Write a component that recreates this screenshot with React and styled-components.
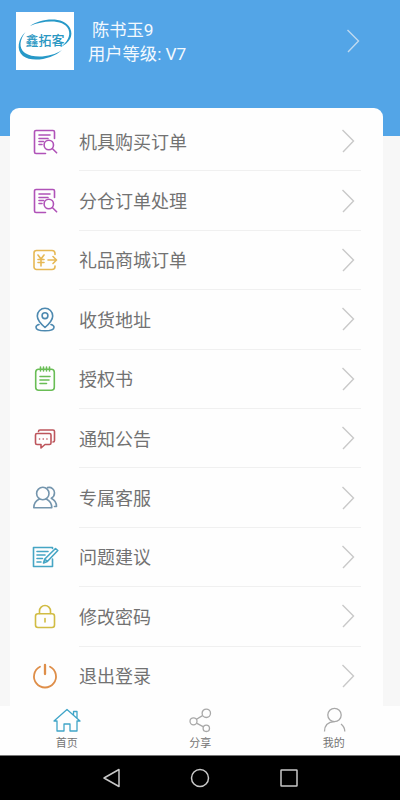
import React from "react";
import styled, { createGlobalStyle } from "styled-components";

const GlobalStyle = createGlobalStyle`
  * { box-sizing: border-box; }
  body {
    margin: 0;
    background: #f7f7f7;
    font-family: Roboto, "Noto Sans CJK SC", sans-serif;
  }
`;

const Screen = styled.div`
  width: 400px;
  height: 800px;
  display: flex;
  flex-direction: column;
  overflow: hidden;
`;

const Content = styled.main`
  height: 706px;
  flex: none;
  padding: 0 17px 0 10px;
  background: linear-gradient(#53a5e7 0 136px, #f7f7f7 136px);
`;

const Profile = styled.header`
  height: 108px;
  display: flex;
  align-items: flex-start;
  padding: 12px 23px 0 6px;
`;

const Logo = styled.svg`
  width: 58px;
  height: 58px;
  flex: none;
  background: #fff;
`;

const ProfileText = styled.div`
  flex: 1;
  padding: 6px 0 0 14px;
  color: #f3f9fe;
  font-size: 17.3px;
  line-height: 24px;
  white-space: nowrap;
`;

const Name = styled.div`
  padding-left: 4px;
`;

const Card = styled.section`
  height: 598px;
  padding: 4px 22px 0 23px;
  background: #fefefe;
  border-radius: 9px 9px 0 0;
`;

const Row = styled.div`
  height: 59.4px;
  display: flex;
  align-items: center;
`;

const RowBody = styled.div`
  flex: 1;
  height: 100%;
  margin-left: 22px;
  display: flex;
  align-items: center;
  justify-content: space-between;
  padding-right: 6px;
  border-bottom: 1px solid ${(p) => (p.$last ? "transparent" : "#f0f0f0")};
`;

const Label = styled.span`
  padding-top: 3px;
  color: #727272;
  font-size: 18px;
  line-height: 26px;
`;

const RowIcon = styled.svg`
  width: 24px;
  height: 26px;
  flex: none;
  overflow: visible;
  fill: none;
  stroke: ${(p) => p.$color};
  stroke-width: 1.6;
  stroke-linecap: round;
  stroke-linejoin: round;
`;

const Arrow = styled.svg`
  width: 14px;
  height: 26px;
  flex: none;
  margin-top: ${(p) => p.$top || 0}px;
  fill: none;
  stroke: ${(p) => p.$color || "#c9c9c9"};
  stroke-width: 1.4;
`;

const TabBar = styled.nav`
  height: 49px;
  flex: none;
  display: grid;
  grid-template-columns: repeat(3, 133.5px);
  background: #fefefe;
`;

const Tab = styled.div`
  display: flex;
  flex-direction: column;
  align-items: center;
  color: #747474;
  font-size: 11px;
  line-height: 16px;
`;

const TabIcon = styled.svg`
  width: 28px;
  height: 28px;
  margin-bottom: 2px;
  fill: none;
  stroke: ${(p) => p.$color};
  stroke-width: 1.3;
  stroke-linejoin: round;
`;

const SystemBar = styled.footer`
  height: 45px;
  flex: none;
  display: flex;
  align-items: center;
  justify-content: center;
  gap: 69px;
  border-top: 1px solid #777;
  background: #000;
`;

const SystemIcon = styled.svg`
  width: 20px;
  height: 20px;
  fill: none;
  stroke: #c8c8c8;
  stroke-width: 1.5;
  stroke-linejoin: round;
`;

const OrderIcon = () => (
  <RowIcon viewBox="0 0 24 26" $color="#b052b8">
    <path d="M21.5 9.500V3a1.500 1.500 0 0 0-1.500-1.500H3A1.500 1.500 0 0 0 1.500 3v20A1.500 1.500 0 0 0 3 24.500h9.500M6 6h11M6 9.500h9M6 12.500h4.500M6 15.500h3" />
    <circle cx="15.800" cy="16" r="4.700" />
    <path d="m19.300 19.500 4.300 4.300" />
  </RowIcon>
);

const GiftIcon = () => (
  <RowIcon viewBox="0 0 24 26" $color="#e6b854">
    <path d="M22 7.500V6.500a3 3 0 0 0-3-3H3.500A2.500 2.500 0 0 0 1 6v14a2.500 2.500 0 0 0 2.500 2.500H19a3 3 0 0 0 3-3V19M5 8l3 4 3-4M8 12v7M5 12.500h6M5 15.500h6M15 13h8M20 9.500l3.500 3.500-3.500 3.500" />
  </RowIcon>
);

const PinIcon = () => (
  <RowIcon viewBox="0 0 24 26" $color="#4d89b0">
    <path d="M12 20.500C8 17 4.300 13 4.300 9a7.700 7.700 0 0 1 15.400 0c0 4-3.700 8-7.700 11.500ZM6 17.500c-2 .6-3 1.500-3 2.700 0 2.300 4 3.600 9 3.600s9-1.300 9-3.600c0-1.200-1-2.100-3-2.700" />
    <circle cx="12" cy="8.700" r="2.900" />
  </RowIcon>
);

const NoteIcon = () => (
  <RowIcon viewBox="0 0 24 26" $color="#69bd55">
    <rect x="2.700" y="3.200" width="18.600" height="21" rx="3" />
    <path d="M7.500 1v4M10.500 1v4M13.500 1v4M16.500 1v4M7 10.500h10M7 14h9M7 17.500h6.500" />
  </RowIcon>
);

const MessageIcon = () => (
  <RowIcon viewBox="0 0 24 26" $color="#bd555c">
    <path d="M4 7.500h12.500A1.500 1.500 0 0 1 18 9v8a1.500 1.500 0 0 1-1.500 1.500H12L8 22v-3.500H4A1.500 1.500 0 0 1 2.500 17V9A1.500 1.500 0 0 1 4 7.500ZM5.500 5.500q0-1.500 1.500-1.500h13a1.500 1.500 0 0 1 1.500 1.500v9q0 1.500-1.500 1.500" />
    <path d="M6.500 13h.1M10.200 13h.1M13.900 13h.1" />
  </RowIcon>
);

const ServiceIcon = () => (
  <RowIcon viewBox="0 0 24 26" $color="#7495ad">
    <circle cx="9.800" cy="8.500" r="6.200" />
    <path d="M6.300 14c-4 2-5.500 4.800-5.500 8.700h18c0-4-1.500-6.700-5.500-8.700M14.500 2.600c4-1 7 1.700 7 5.200 0 2.500-1.300 4.500-3.200 5.500 3.500 1.800 5.200 4.500 5.200 8.200h-2" />
  </RowIcon>
);

const FeedbackIcon = () => (
  <RowIcon viewBox="0 0 24 26" $color="#45a5c4">
    <path d="M19.500 4.500V3.500H.5v19h19V15M4 7.500h11M4 11h8M4 14.500h5.500M4 18h4M10.500 19l1.300-4L22.500 4.500l2.300 2-10.500 11ZM11.800 15l2.500 2.500" />
  </RowIcon>
);

const LockIcon = () => (
  <RowIcon viewBox="0 0 24 26" $color="#d1bc43">
    <rect x="2.500" y="9.700" width="19" height="13.800" rx="2.500" />
    <path d="M6.500 9.500V7a5.500 5.500 0 0 1 11 0v2.500M12 14.500v3.500" />
  </RowIcon>
);

const PowerIcon = () => (
  <RowIcon viewBox="0 0 24 26" $color="#de8e49">
    <path strokeWidth="1.800" d="M7 3.700a11 11 0 1 0 10 0" />
    <path strokeWidth="2.300" d="M12 2v9" />
  </RowIcon>
);

const items = [
  ["机具购买订单", OrderIcon],
  ["分仓订单处理", OrderIcon],
  ["礼品商城订单", GiftIcon],
  ["收货地址", PinIcon],
  ["授权书", NoteIcon],
  ["通知公告", MessageIcon],
  ["专属客服", ServiceIcon],
  ["问题建议", FeedbackIcon],
  ["修改密码", LockIcon],
  ["退出登录", PowerIcon],
];

const LogoText = styled.text`
  font: 500 13px "Noto Sans CJK SC", sans-serif;
  fill: #2a97c2;
`;

function Chevron(props) {
  return (
    <Arrow viewBox="0 0 14 26" {...props}>
      <path d="m1.500 2 11 11-10.500 11" />
    </Arrow>
  );
}

export default function App() {
  return (
    <Screen>
      <GlobalStyle />
      <Content>
        <Profile>
          <Logo viewBox="0 0 58 58">
            <path fill="#2799c8" d="M14 14C25 6 48 4 54 16c4 8-1 15-9 19 6-5 10-11 7.500-17.500C48 7 28 8 14 14ZM9.500 20C4 27 2 36 9 41c9 6 27 4 37-3-9 9-30 13-39 6C0 38 2 27 9.500 20Z" />
            <LogoText x="9.500" y="33">鑫拓客</LogoText>
          </Logo>
          <ProfileText>
            <Name>陈书玉9</Name>
            <div>用户等级: V7</div>
          </ProfileText>
          <Chevron $color="#bfdaf0" $top={16} />
        </Profile>
        <Card>
          {items.map(([label, Icon], i) => (
            <Row key={label}>
              <Icon />
              <RowBody $last={i === items.length - 1}>
                <Label>{label}</Label>
                <Chevron />
              </RowBody>
            </Row>
          ))}
        </Card>
      </Content>
      <TabBar>
        <Tab>
          <TabIcon viewBox="0 0 28 28" $color="#40a5c8">
            <path d="M1 15 14 3.500 27 15h-3v10h-7v-7h-6v7H4V15ZM20.500 9V5.500h3.500V12" />
          </TabIcon>
          首页
        </Tab>
        <Tab>
          <TabIcon viewBox="0 0 28 28" $color="#a8a8a8">
            <circle cx="7.500" cy="15.300" r="3.500" />
            <circle cx="20.300" cy="7.300" r="4.200" />
            <circle cx="20.300" cy="22.300" r="3.200" />
            <path d="m10.500 13.300 6-3.700M10.500 17.200l7 3.600" />
          </TabIcon>
          分享
        </Tab>
        <Tab>
          <TabIcon viewBox="0 0 28 28" $color="#a8a8a8">
            <circle cx="14.500" cy="9" r="6.700" />
            <path d="M4.500 25.500c0-6 3.500-9.500 10-9.800M21 18c2.500 2 3.800 4.500 3.800 7.500" />
          </TabIcon>
          我的
        </Tab>
      </TabBar>
      <SystemBar>
        <SystemIcon viewBox="0 0 20 20"><path d="M3 10 18 1.500v17Z" /></SystemIcon>
        <SystemIcon viewBox="0 0 20 20"><circle cx="10" cy="10" r="8.500" /></SystemIcon>
        <SystemIcon viewBox="0 0 20 20"><rect x="2" y="2" width="16" height="16" rx=".5" /></SystemIcon>
      </SystemBar>
    </Screen>
  );
}
